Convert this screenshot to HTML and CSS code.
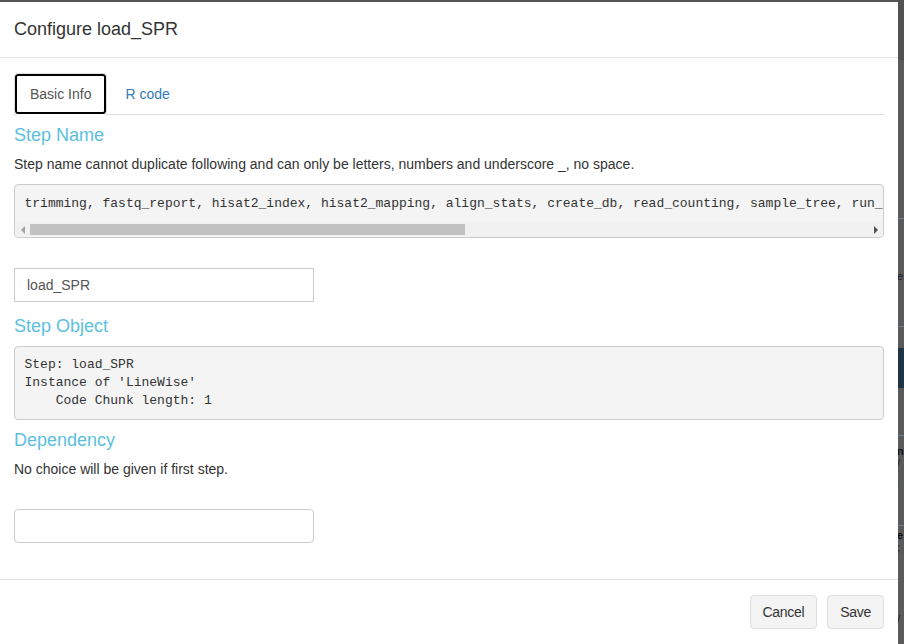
FILE: index.html
```html
<!DOCTYPE html>
<html lang="en">
<head>
  <meta charset="UTF-8" />
  <title>Configure load_SPR</title>
  <link rel="stylesheet" href="styles.css">
</head>
<body>

  <div class="screen">

    <!-- MODAL -->
    <div class="modal">
      <div class="modal-header">
        <h4 class="modal-title">Configure load_SPR</h4>
      </div>

      <div class="modal-body">
        <ul class="tabs">
          <li class="active"><a>Basic Info</a></li>
          <li><a>R code</a></li>
        </ul>

        <div class="tab-pane">
          <h4 class="sec">Step Name</h4>
          <p>Step name cannot duplicate following and can only be letters, numbers and underscore _, no space.</p>

          <div class="code-box">
            <pre class="code-line">trimming, fastq_report, hisat2_index, hisat2_mapping, align_stats, create_db, read_counting, sample_tree, run_edger, custom_volcano_plot, filter_degs, venn_diagram, get_go_annot, go_enrich, go_plot, heatmap, pca</pre>
            <div class="hbar">
              <span class="arr"><i class="tri-left"></i></span>
              <div class="track"><span class="thumb"></span></div>
              <span class="arr"><i class="tri-right"></i></span>
            </div>
          </div>

          <div class="field">
            <input type="text" class="txt" value="load_SPR" />
          </div>

          <h4 class="sec">Step Object</h4>
          <pre class="code">Step: load_SPR
Instance of 'LineWise'
    Code Chunk length: 1</pre>

          <h4 class="sec">Dependency</h4>
          <p>No choice will be given if first step.</p>

          <div class="field last">
            <input type="text" class="txt round" />
          </div>
        </div>
      </div>

      <div class="modal-footer">
        <button class="btn">Cancel</button>
        <button class="btn">Save</button>
      </div>
    </div>

    <!-- page behind the backdrop -->
    <div class="behind">
      <div class="b-top"></div>
      <div class="b-gap" style="height:158px"></div>
      <div class="b-line"></div>
      <div class="b-gap" style="height:51px"></div>
      <div class="b-txt">e</div>
      <div class="b-gap" style="height:44px"></div>
      <div class="b-line"></div>
      <div class="b-gap" style="height:21px"></div>
      <div class="b-navy"></div>
      <div class="b-gap" style="height:47px"></div>
      <div class="b-line"></div>
      <div class="b-gap" style="height:9px"></div>
      <div class="b-txt bold">n</div>
      <div class="b-txt">/</div>
      <div class="b-gap" style="height:6px"></div>
      <div class="b-txt blue">/</div>
      <div class="b-gap" style="height:38px"></div>
      <div class="b-line"></div>
      <div class="b-gap" style="height:3px"></div>
      <div class="b-txt bold">e</div>
      <div class="b-txt">;</div>
      <div class="b-gap" style="height:60px"></div>
      <div class="b-txt">/</div>
    </div>

  </div>

</body>
</html>
```

FILE: styles.css
```css
* {
  box-sizing: border-box;
}

html,
body {
  margin: 0;
  height: 644px;
  overflow: hidden;
}

body {
  font-family: 'Liberation Sans', Arial, sans-serif;
  font-size: 14px;
  line-height: 1.42857;
  color: #333;
  background-color: #555;
}

.screen {
  display: flex;
  align-items: flex-start;
  height: 644px;
}

/* modal */

.modal {
  width: 898px;
  min-height: 642px;
  flex: none;
  margin-top: 2px;
  background-color: #fff;
}

.modal-header {
  padding: 15px 14px 14px;
  border-bottom: 1px solid #e5e5e5;
}

.modal-title {
  margin: 0;
  font-size: 18px;
  font-weight: normal;
  line-height: 1.42857;
}

.modal-body {
  padding: 15px 14px;
}

.tabs {
  display: flex;
  list-style: none;
  margin: 0;
  padding: 0;
  border-bottom: 1px solid #ddd;
}

.tabs li {
  margin-bottom: -1px;
}

.tabs a {
  display: block;
  margin-right: 2px;
  padding: 10px 15px;
  line-height: 20px;
  border: 1px solid transparent;
  border-radius: 4px 4px 0 0;
  color: #337ab7;
}

.tabs li.active a {
  color: #555;
  background-color: #fff;
  border-color: #ddd #ddd transparent;
  box-shadow: inset 0 0 0 2px #000;
  border-radius: 4px;
}

.sec {
  margin: 11px 0 9px;
  font-size: 18px;
  font-weight: normal;
  line-height: 1.1;
  color: #5bc0de;
}

p {
  margin: 0 0 10px;
}

.code,
.code-line {
  font-family: 'Liberation Mono', 'DejaVu Sans Mono', monospace;
  font-size: 13px;
  line-height: 18px;
  color: #333;
  white-space: pre;
}

.code {
  margin: 0 0 10px;
  padding: 9.5px;
  line-height: 17.7px;
  background-color: #f4f4f4;
  border: 1px solid #ccc;
  border-radius: 4px;
}

/* pre with a horizontal scrollbar */

.code-box {
  margin: 0 0 10px;
  background-color: #f4f4f4;
  border: 1px solid #ccc;
  border-radius: 4px;
  overflow: hidden;
}

.code-line {
  margin: 0;
  padding: 9.5px;
  overflow: hidden;
}

.hbar {
  display: flex;
  height: 15px;
  background-color: #f1f1f1;
}

.arr {
  width: 15px;
  flex: none;
  display: flex;
  align-items: center;
  justify-content: center;
}

.tri-left {
  border-top: 4px solid transparent;
  border-bottom: 4px solid transparent;
  border-right: 4px solid #a3a3a3;
}

.tri-right {
  border-top: 4px solid transparent;
  border-bottom: 4px solid transparent;
  border-left: 4px solid #505050;
}

.track {
  flex: 1;
  padding: 2px 0;
}

.thumb {
  display: block;
  width: 435px;
  height: 11px;
  background-color: #c1c1c1;
}

.field {
  padding-top: 19.5px;
  margin-bottom: 15px;
}

.field.last {
  margin-bottom: 0;
  padding-bottom: 20.5px;
}

.txt {
  display: block;
  width: 300px;
  height: 34px;
  padding: 6px 12px;
  font-family: 'Liberation Sans', Arial, sans-serif;
  font-size: 14px;
  color: #555;
  background-color: #fff;
  border: 1px solid #ccc;
  border-radius: 0;
  outline: none;
}

.txt.round {
  border-radius: 4px;
}

.modal-footer {
  display: flex;
  justify-content: flex-end;
  gap: 10px;
  padding: 15px 14px;
  border-top: 1px solid #e5e5e5;
}

.btn {
  height: 34px;
  padding: 6px 12px;
  font-family: 'Liberation Sans', Arial, sans-serif;
  font-size: 14px;
  letter-spacing: -0.3px;
  color: #333;
  background-color: #f4f4f4;
  border: 1px solid #ddd;
  border-radius: 4px;
}

/* dimmed page on the right */

.behind {
  width: 6px;
  flex: none;
  height: 644px;
  overflow: hidden;
  background-color: #5a5a5a;
}

.b-top {
  height: 60px;
  background-color: #525252;
}

.b-line {
  height: 1px;
  background-color: #6c7985;
}

.b-navy {
  height: 40px;
  background-color: #1e3446;
}

.b-txt {
  height: 12px;
  margin-left: -1px;
  font-size: 11px;
  line-height: 12px;
  overflow: hidden;
  color: #1f1f1f;
}

.b-txt.bold {
  font-weight: bold;
  color: #111;
}

.b-txt.blue {
  color: #3b5b78;
}
```
